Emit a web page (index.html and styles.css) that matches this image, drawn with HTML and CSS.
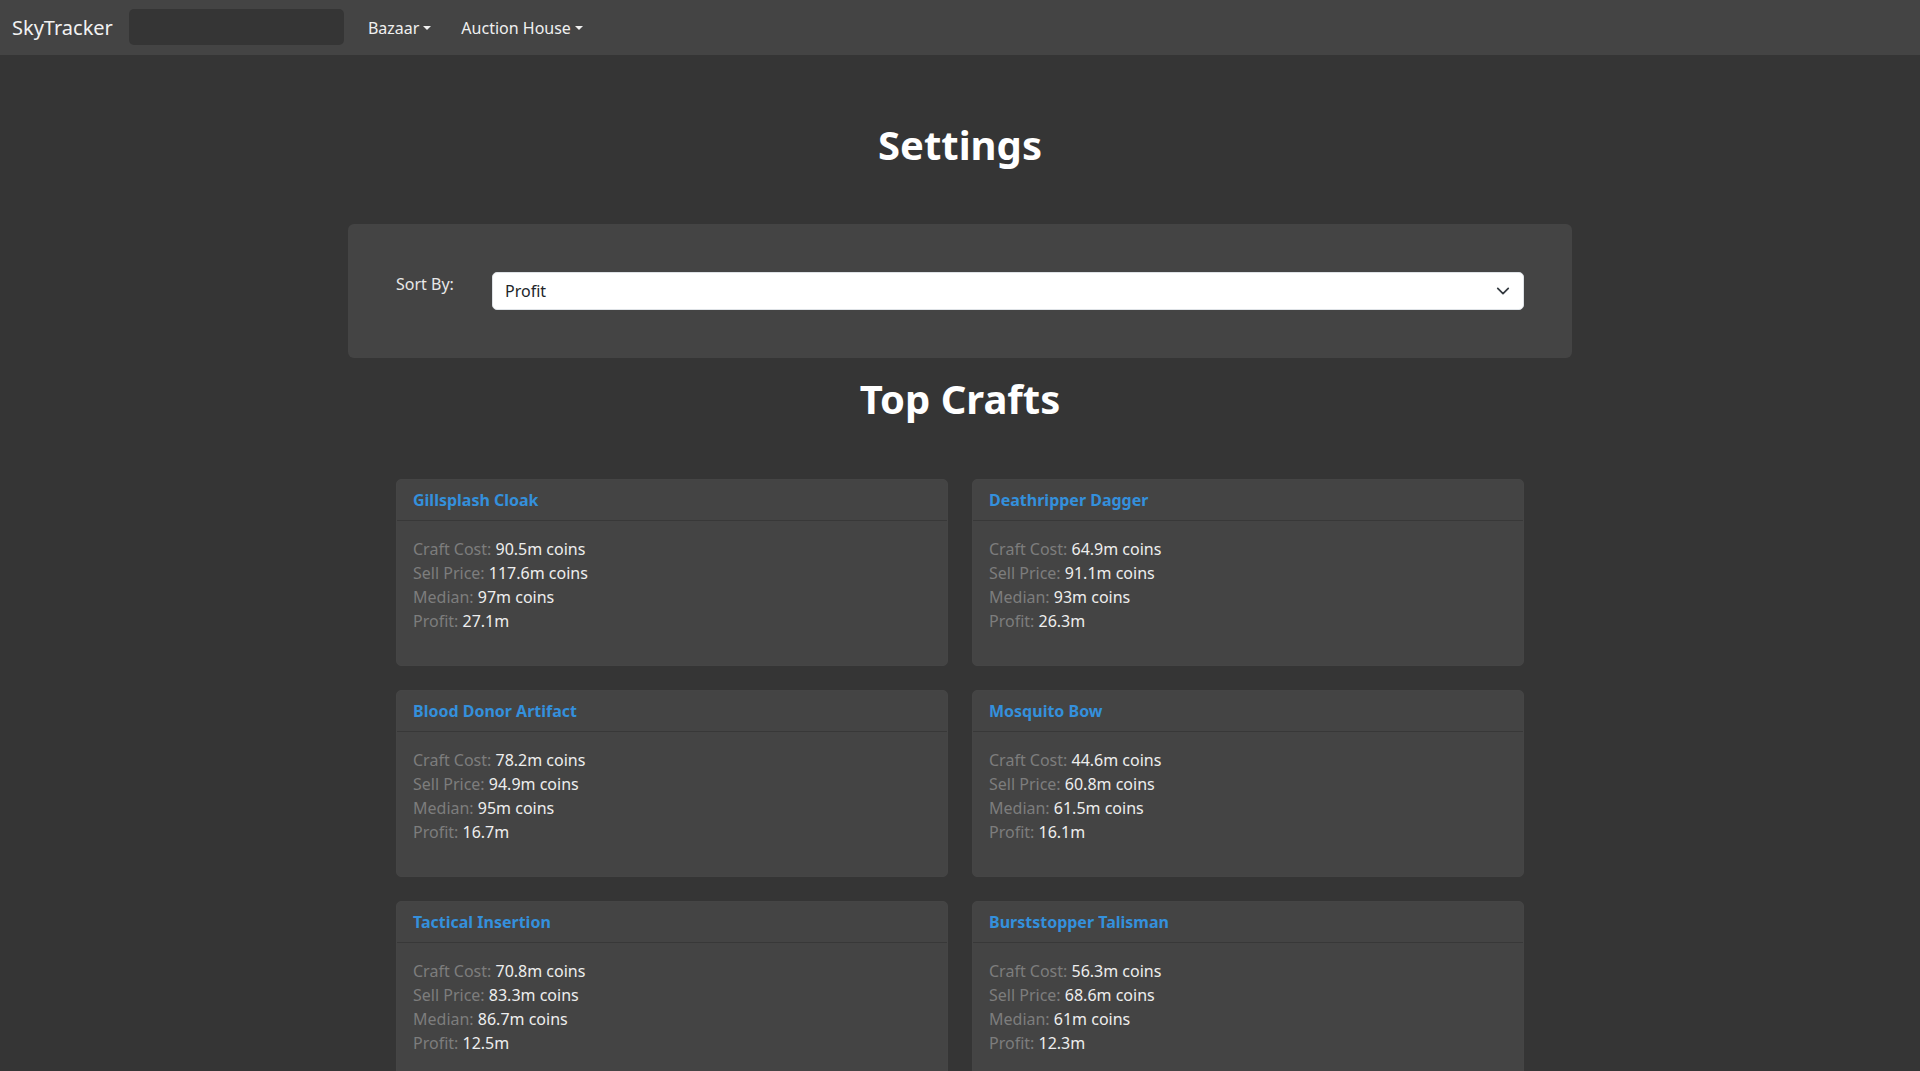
FILE: index.html
```html
<!DOCTYPE html>
<html lang="en">
<head>
<meta charset="utf-8">
<title>SkyTracker</title>
<link rel="stylesheet" href="styles.css">
</head>
<body>
<nav class="navbar">
  <a class="brand" href="#">SkyTracker</a>
  <input class="search" type="text" aria-label="Search">
  <ul class="nav">
    <li><a class="nav-link" href="#">Bazaar<span class="caret"></span></a></li>
    <li><a class="nav-link" href="#">Auction House<span class="caret"></span></a></li>
  </ul>
</nav>
<main class="container">
  <h1 class="title settings-title">Settings</h1>
  <section class="panel">
    <label class="sort-label" for="sort">Sort By:</label>
    <div class="select">
      <span>Profit</span>
      <svg class="chev" width="16" height="16" viewBox="0 0 16 16"><path d="M2 5l6 6 6-6" fill="none" stroke="#343a40" stroke-width="2" stroke-linecap="round" stroke-linejoin="round"/></svg>
    </div>
  </section>
  <h1 class="title crafts-title">Top Crafts</h1>
  <div class="grid">
    <div class="card">
      <div class="card-header">Gillsplash Cloak</div>
      <div class="card-body"><p>
        <span class="lbl">Craft Cost:</span> 90.5m coins<br>
        <span class="lbl">Sell Price:</span> 117.6m coins<br>
        <span class="lbl">Median:</span> 97m coins<br>
        <span class="lbl">Profit:</span> 27.1m</p></div>
    </div>
    <div class="card">
      <div class="card-header">Deathripper Dagger</div>
      <div class="card-body"><p>
        <span class="lbl">Craft Cost:</span> 64.9m coins<br>
        <span class="lbl">Sell Price:</span> 91.1m coins<br>
        <span class="lbl">Median:</span> 93m coins<br>
        <span class="lbl">Profit:</span> 26.3m</p></div>
    </div>
    <div class="card">
      <div class="card-header">Blood Donor Artifact</div>
      <div class="card-body"><p>
        <span class="lbl">Craft Cost:</span> 78.2m coins<br>
        <span class="lbl">Sell Price:</span> 94.9m coins<br>
        <span class="lbl">Median:</span> 95m coins<br>
        <span class="lbl">Profit:</span> 16.7m</p></div>
    </div>
    <div class="card">
      <div class="card-header">Mosquito Bow</div>
      <div class="card-body"><p>
        <span class="lbl">Craft Cost:</span> 44.6m coins<br>
        <span class="lbl">Sell Price:</span> 60.8m coins<br>
        <span class="lbl">Median:</span> 61.5m coins<br>
        <span class="lbl">Profit:</span> 16.1m</p></div>
    </div>
    <div class="card">
      <div class="card-header">Tactical Insertion</div>
      <div class="card-body"><p>
        <span class="lbl">Craft Cost:</span> 70.8m coins<br>
        <span class="lbl">Sell Price:</span> 83.3m coins<br>
        <span class="lbl">Median:</span> 86.7m coins<br>
        <span class="lbl">Profit:</span> 12.5m</p></div>
    </div>
    <div class="card">
      <div class="card-header">Burststopper Talisman</div>
      <div class="card-body"><p>
        <span class="lbl">Craft Cost:</span> 56.3m coins<br>
        <span class="lbl">Sell Price:</span> 68.6m coins<br>
        <span class="lbl">Median:</span> 61m coins<br>
        <span class="lbl">Profit:</span> 12.3m</p></div>
    </div>
  </div>
</main>
</body>
</html>
```
FILE: styles.css
```css
* { box-sizing: border-box; }
html, body { margin: 0; padding: 0; }
body {
  background: #353535;
  color: #eeeeee;
  font-family: "Noto Sans", "Open Sans", sans-serif;
  font-size: 16px;
  line-height: 1.5;
}
.navbar {
  height: 55px;
  background: #444444;
  display: flex;
  align-items: center;
  padding: 0 12px;
}
.brand {
  color: #f2f2f2;
  text-decoration: none;
  font-size: 20px;
  margin-right: 16px;
}
.search {
  width: 215px;
  height: 36px;
  border: none;
  border-radius: 5px;
  background: #353535;
  margin-right: 16px;
  margin-bottom: 2px;
}
.nav {
  list-style: none;
  display: flex;
  margin: 0;
  padding: 0;
}
.nav-link {
  display: inline-flex;
  align-items: center;
  color: #f0f0f0;
  text-decoration: none;
  padding: 8px 8px;
  margin-right: 14px;
}
.caret {
  display: inline-block;
  margin-left: 4px;
  width: 0; height: 0;
  border-left: 4px solid transparent;
  border-right: 4px solid transparent;
  border-top: 4px solid #f0f0f0;
}
.container {
  width: 1224px;
  margin: 0 auto;
  padding-top: 66px;
}
.title {
  margin: 0;
  text-align: center;
  font-size: 40px;
  line-height: 48px;
  font-weight: 700;
  color: #ffffff;
}
.settings-title { margin-bottom: 55px; }
.panel {
  background: #444444;
  border-radius: 6px;
  padding: 48px;
  display: flex;
  align-items: flex-start;
}
.sort-label {
  width: 96px;
  flex: none;
  color: #e8e8e8;
}
.select {
  flex: 1;
  height: 38px;
  background: #ffffff;
  border: 1px solid #dee2e6;
  border-radius: 5px;
  display: flex;
  align-items: center;
  justify-content: space-between;
  padding: 0 13px 0 12px;
  color: #212529;
  margin-top: 0;
}
.chev { display: block; width: 14px; height: 14px; }
.crafts-title { margin-top: 17px; margin-bottom: 56px; }
.grid {
  display: grid;
  grid-template-columns: 1fr 1fr;
  gap: 24px;
  padding: 0 48px;
}
.card {
  background: #444444;
  border: 1px solid #454545;
  border-radius: 5px;
}
.card-header {
  padding: 8px 16px;
  border-bottom: 1px solid #383838;
  color: #3490dc;
  font-weight: 700;
}
.card-body { padding: 16px; }
.card-body p { margin: 0 0 16px; }
.lbl { color: #7d7d7d; }
```
